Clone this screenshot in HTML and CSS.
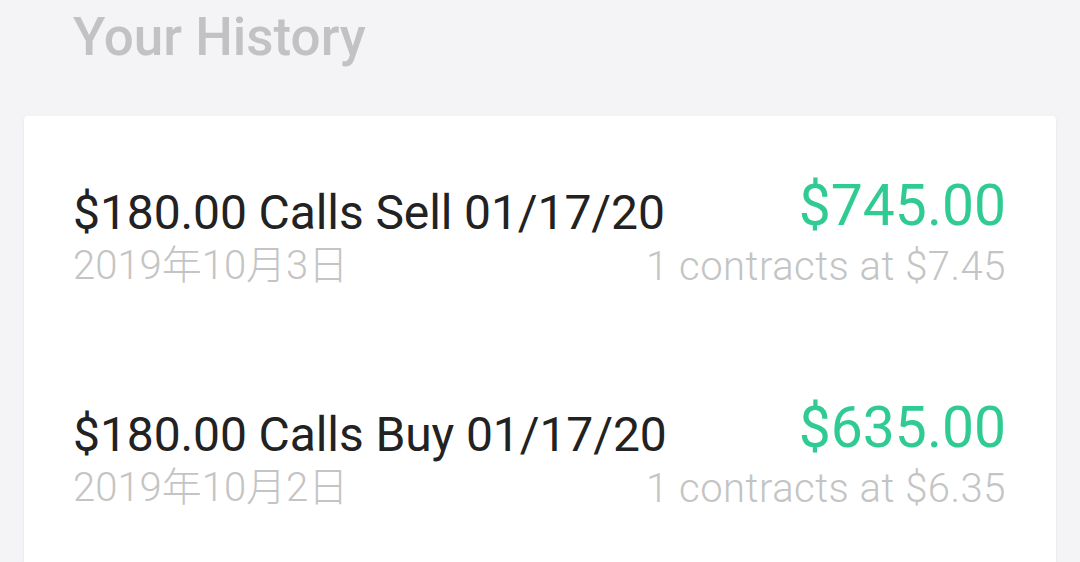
FILE: index.html
```html
<!DOCTYPE html>
<html lang="en">
<head>
<meta charset="utf-8">
<link rel="stylesheet" href="styles.css">
</head>
<body>
<div class="page">
  <h1 class="title">Your History</h1>
  <div class="card">
    <div class="row">
      <div class="left">
        <div class="name">$180.00 Calls Sell 01/17/20</div>
        <div class="sub">2019年10月3日</div>
      </div>
      <div class="right">
        <div class="amount">$745.00</div>
        <div class="sub">1 contracts at $7.45</div>
      </div>
    </div>
    <div class="row">
      <div class="left">
        <div class="name">$180.00 Calls Buy 01/17/20</div>
        <div class="sub">2019年10月2日</div>
      </div>
      <div class="right">
        <div class="amount">$635.00</div>
        <div class="sub">1 contracts at $6.35</div>
      </div>
    </div>
  </div>
</div>
</body>
</html>
```
FILE: styles.css
```css
html, body {
  margin: 0;
  padding: 0;
  background: #f4f4f6;
  overflow: hidden;
}
body {
  font-family: Roboto, "Noto Sans CJK SC", sans-serif;
  width: 1080px;
  height: 562px;
}
.page {
  padding: 5px 24px 0 24px;
}
.title {
  margin: 0 0 47px 49px;
  font-size: 53px;
  line-height: 64px;
  font-weight: 500;
  color: #c2c2c4;
  white-space: nowrap;
}
.card {
  background: #ffffff;
  border-radius: 4px 4px 0 0;
  box-shadow: 0 1px 3px rgba(0, 0, 0, 0.08);
  padding: 0 50px 2px 49px;
}
.row {
  height: 222px;
  box-sizing: border-box;
  padding-top: 69px;
  display: flex;
  align-items: flex-start;
  white-space: nowrap;
}
.left, .right {
  display: flex;
  flex-direction: column;
}
.left {
  flex: 1 1 0;
  min-width: 0;
}
.right {
  flex: none;
  align-items: flex-end;
  margin-top: -9.5px;
}
.name {
  font-size: 48px;
  line-height: 55px;
  color: #222222;
  font-weight: 400;
  letter-spacing: -0.1px;
}
.sub {
  margin-top: 3px;
  font-size: 40px;
  line-height: 46px;
  font-weight: 300;
  color: #c4c4c4;
}
.right .sub {
  letter-spacing: 0.5px;
}
.amount {
  font-size: 57px;
  line-height: 60px;
  color: #2fcb93;
  font-weight: 400;
  margin-bottom: 5px;
}
```
